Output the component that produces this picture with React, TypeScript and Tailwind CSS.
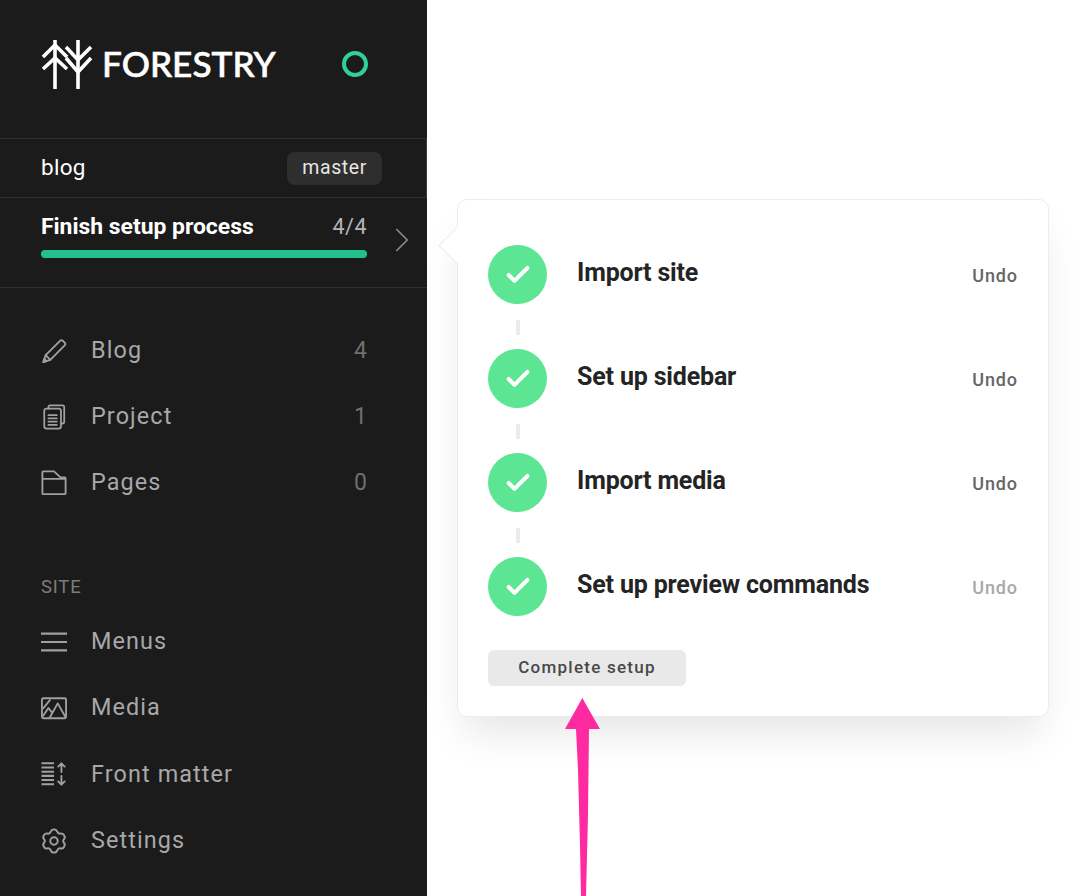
import { Check, ChevronRight } from 'lucide-react';
import type { ReactNode } from 'react';

const Pencil = () => (
  <svg width="26" height="26" viewBox="0 0 28 28" fill="none" stroke="currentColor" strokeWidth="2" strokeLinejoin="round" strokeLinecap="round">
    <path d="M2.5 26 L5 18.5 L20.5 3 Q22 1.6 23.5 3 L25.5 5 Q27 6.5 25.5 8 L10 23.5 Z" />
    <path d="M5 18.5 L10 23.5" />
    <path d="M2.5 26 L6 25 L3.5 22.5 Z" fill="currentColor" />
  </svg>
);

const Docs = () => (
  <svg width="26" height="26" viewBox="0 0 28 28" fill="none" stroke="currentColor" strokeWidth="1.9" strokeLinejoin="round" strokeLinecap="round">
    <path d="M8 5 V3.5 Q8 1.5 10 1.5 H23 Q25 1.5 25 3.5 V19 Q25 21 23 21 H21.5" />
    <rect x="3.5" y="5" width="18" height="21.5" rx="2.5" />
    <path d="M8 12 H17 M8 15.5 H17 M8 19 H17 M8 22.5 H17" />
  </svg>
);

const Folder = () => (
  <svg width="26" height="26" viewBox="0 0 28 28" fill="none" stroke="currentColor" strokeWidth="2" strokeLinejoin="round">
    <path d="M1.5 9.5 V2.5 Q1.5 1.5 2.5 1.5 H14 L21 8 H25.5 Q26.5 8 26.5 9 V25 Q26.5 26 25.5 26 H2.5 Q1.5 26 1.5 25 V9.5 H26.5" />
  </svg>
);

const Lines = () => (
  <svg width="26" height="26" viewBox="0 0 28 28" fill="none" stroke="currentColor" strokeWidth="2.4">
    <path d="M0 5 H28 M0 14 H28 M0 23 H28" />
  </svg>
);

const Picture = () => (
  <svg width="26" height="26" viewBox="0 0 28 28" fill="none" stroke="currentColor" strokeWidth="2" strokeLinejoin="round">
    <rect x="1" y="3.5" width="26" height="21.5" rx="1.5" />
    <path d="M2 15 L10 5 M2 23 L8 14 L12 19 M9 25 L18 9 L26.5 24" />
  </svg>
);

const Matter = () => (
  <svg width="26" height="26" viewBox="0 0 28 28" fill="none" stroke="currentColor" strokeWidth="2" strokeLinecap="round" strokeLinejoin="round">
    <path d="M0.5 2.5 H14 M0.5 7 H14 M0.5 11.5 H14 M0.5 16 H14 M0.5 20.5 H14 M0.5 25 H14" strokeWidth="2.2" strokeLinecap="butt" />
    <path d="M22 3 V12 M18.5 6 L22 2.5 L25.5 6" />
    <path d="M22 16 V25.5 M18.5 22 L22 25.5 L25.5 22" />
  </svg>
);

const Gear = () => (
  <svg width="26" height="26" viewBox="0 0 28 28" fill="none" stroke="currentColor" strokeWidth="2.1" strokeLinejoin="round">
    <path d="M14 1.5 Q16.5 1.5 17.5 4 Q18.5 6.5 21 6 Q24 5.6 25 8 Q26.5 10.5 24.5 12.3 Q23.2 14 24.5 15.7 Q26.5 17.5 25 20 Q24 22.4 21 22 Q18.5 21.5 17.5 24 Q16.5 26.5 14 26.5 Q11.5 26.5 10.5 24 Q9.5 21.5 7 22 Q4 22.4 3 20 Q1.5 17.5 3.5 15.7 Q4.8 14 3.5 12.3 Q1.5 10.5 3 8 Q4 5.6 7 6 Q9.5 6.5 10.5 4 Q11.5 1.5 14 1.5 Z" />
    <circle cx="14" cy="14" r="4" />
  </svg>
);

const Logo = () => (
  <svg width="54" height="50" viewBox="0 0 54 50" fill="none" stroke="white" strokeWidth="3.6">
    <path d="M14 0 V49" />
    <path d="M2 17 L14 5 L26 17 M2 29 L14 18 L26 29" />
    <path d="M37 0 V49" />
    <path d="M25 7 L37 20 L50 7 M25 18 L37 32 L50 18" />
  </svg>
);

const mainNav: { icon: ReactNode; label: string; count: string }[] = [
  { icon: <Pencil />, label: 'Blog', count: '4' },
  { icon: <Docs />, label: 'Project', count: '1' },
  { icon: <Folder />, label: 'Pages', count: '0' },
];

const siteNav: { icon: ReactNode; label: string }[] = [
  { icon: <Lines />, label: 'Menus' },
  { icon: <Picture />, label: 'Media' },
  { icon: <Matter />, label: 'Front matter' },
  { icon: <Gear />, label: 'Settings' },
];

const steps = ['Import site', 'Set up sidebar', 'Import media', 'Set up preview commands'];

const NavRow = ({ icon, label, count }: { icon: ReactNode; label: string; count?: string }) => (
  <div className="flex items-center h-full pl-[41px] pr-[60px] text-[#a8a8a8]">
    <span className="w-[50px] shrink-0 text-[#a0a0a0] flex">{icon}</span>
    <span className="flex-1 text-[23.4px] tracking-[1.1px] leading-none">{label}</span>
    {count && <span className="text-[23px] text-[#6f6f6f] leading-none -mt-[2px]">{count}</span>}
  </div>
);

export default function App() {
  return (
    <div className="relative w-[1080px] h-[896px] overflow-hidden bg-white font-['Roboto',sans-serif]">
      {/* Sidebar */}
      <aside className="w-[427px] h-full bg-[#1b1b1b]">
        <div className="h-[138px] pl-[41px] pr-[59px] pt-[40px] flex items-start justify-between">
          <div className="flex items-start gap-[7px]">
            <Logo />
            <span className="font-['Lato',sans-serif] font-medium text-white text-[35.2px] leading-none mt-[6px] [-webkit-text-stroke:0.6px_white]">FORESTRY</span>
          </div>
          <span className="mt-[11px] w-[26px] h-[26px] rounded-full border-[4px] border-[#2fd09b]" />
        </div>

        <div className="h-[60px] border-y border-r border-[#303030] border-r-[#3c3c3c] pl-[41px] pr-[44px] flex items-center justify-between">
          <span className="text-white text-[22.5px] tracking-[0.3px]">blog</span>
          <span className="h-[33px] px-[15px] rounded-[8px] bg-[#2e2e2e] text-[#e6e6e6] text-[19.5px] tracking-[0.6px] flex items-center">master</span>
        </div>

        <div className="h-[90px] border-b border-[#303030] pl-[41px] pr-[4px] flex items-center">
          <div className="w-[326px] -mt-[14px]">
            <div className="flex justify-between items-center h-[28px]">
              <span className="text-white font-bold text-[22.9px]">Finish setup process</span>
              <span className="text-[#b5b5b5] text-[21.5px] tracking-[0.5px]">4/4</span>
            </div>
            <div className="mt-[9px] h-[8px] rounded-full bg-[#22c08f]" />
          </div>
          <ChevronRight size={42} strokeWidth={1} className="ml-auto -mt-[5px] text-[#8a8a8a]" />
        </div>

        <nav className="pt-[30px] grid auto-rows-[66px]">
          {mainNav.map((item) => (
            <NavRow key={item.label} {...item} />
          ))}
        </nav>

        <div className="mt-[60px] mb-[8.7px] pl-[41px] h-[24px] flex items-center text-[18.5px] tracking-[0.8px] text-[#7c7c7c]">SITE</div>

        <nav className="grid auto-rows-[66.3px]">
          {siteNav.map((item) => (
            <NavRow key={item.label} {...item} />
          ))}
        </nav>
      </aside>

      {/* Setup popover */}
      <div className="absolute left-[457px] top-[199px] w-[592px] h-[518px] rounded-[10px] bg-white border border-[#ececec] shadow-[0_24px_40px_-8px_rgba(0,0,0,0.1)] pl-[30px] pr-[30px] pt-[45px]">
        <span className="absolute -left-[14px] top-[32px] w-[27px] h-[27px] rotate-45 bg-white border-l border-b border-[#ececec]" />
        {steps.map((step, i) => (
          <div key={step}>
            <div className="flex items-center h-[60px]">
              <span className="self-start w-[59px] h-[59px] rounded-full bg-[#5ce592] flex items-center justify-center shrink-0">
                <Check size={28} strokeWidth={3.5} className="text-white" />
              </span>
              <span className="ml-[30px] flex-1 text-[25px] font-bold text-[#242424] tracking-[-0.17px] -mt-[4px]">{step}</span>
              <span className={`text-[18px] font-medium tracking-[0.9px] ${i === 3 ? 'text-[#a8a8a8]' : 'text-[#666666]'}`}>Undo</span>
            </div>
            {i < 3 && (
              <div className="h-[44px] flex items-center pl-[28px]">
                <span className="w-[4px] h-[15px] bg-[#ebebeb]" />
              </div>
            )}
          </div>
        ))}
        <button className="mt-[33px] w-[198px] h-[36px] rounded-[6px] bg-[#e9e9e9] text-[#484848] text-[17px] font-medium tracking-[1.25px] flex items-center justify-center pb-[1px]">
          Complete setup
        </button>
      </div>

      {/* Annotation arrow */}
      <svg className="absolute left-[560px] top-[695px]" width="45" height="201" viewBox="0 0 45 201">
        <path d="M22.3 3 L5 34 L16 34 L18 75 L20 150 L21 201 L26 201 L28 120 L29 34 L40 34 Z" fill="#ff2aa1" />
      </svg>
    </div>
  );
}
